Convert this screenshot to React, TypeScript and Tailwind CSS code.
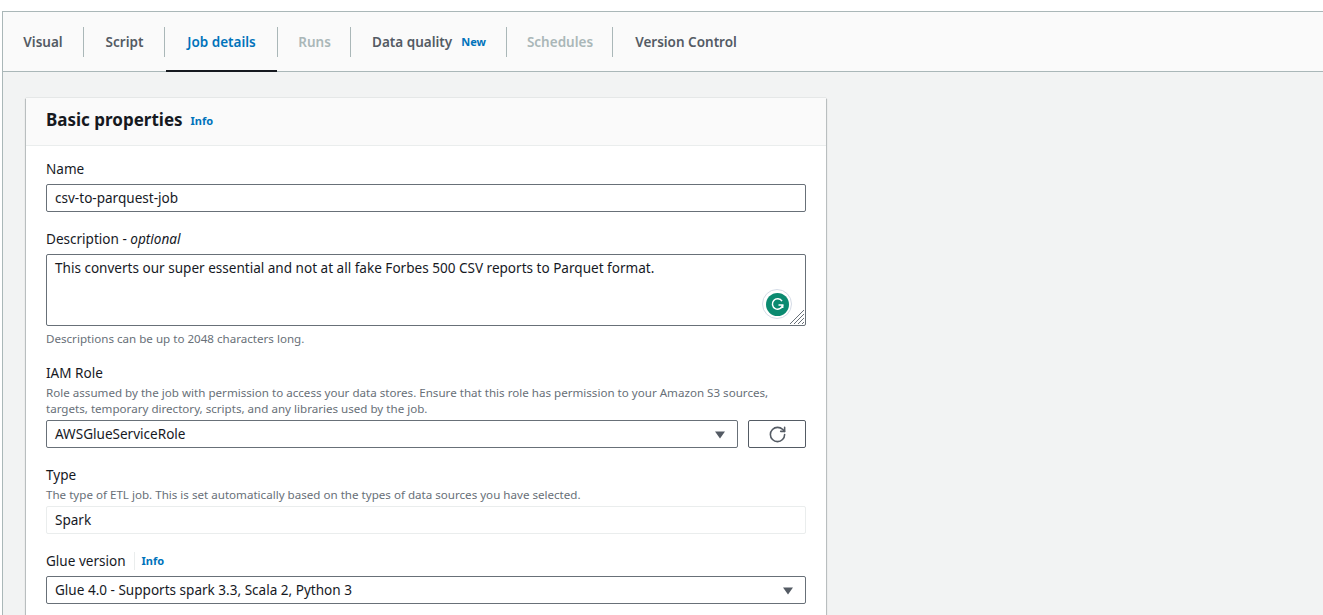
import React from "react";
import { RotateCw } from "lucide-react";

const font = "font-['Noto_Sans','Open_Sans',sans-serif]";

const tabs = [
  { label: "Visual", w: "w-[82px]", cls: "text-[#545b64]" },
  { label: "Script", w: "w-[81px]", cls: "text-[#545b64]" },
  { label: "Job details", w: "w-[113px]", cls: "text-[#0073bb]", active: true },
  { label: "Runs", w: "w-[73px]", cls: "text-[#aab7b8]" },
  { label: "Data quality", w: "w-[156px]", cls: "text-[#545b64]", badge: "New" },
  { label: "Schedules", w: "w-[106px]", cls: "text-[#aab7b8]" },
  { label: "Version Control", w: "w-[146px]", cls: "text-[#545b64]" },
];

function Caret() {
  return (
    <svg width="12" height="8" viewBox="0 0 12 8" className="shrink-0">
      <path d="M1 0.5h10L6 7.5z" fill="#545b64" />
    </svg>
  );
}

export default function App() {
  return (
    <div className={`${font} h-[615px] w-[1323px] overflow-hidden bg-white text-[#16191f] text-[13.55px]`}>
      <div className="h-[11px]" />
      <div className="ml-[2px] h-[604px] overflow-hidden border-l border-t border-[#aab7b8] bg-[#f2f3f3]">
        {/* Tabs */}
        <div className="flex h-[60px] items-center border-b border-[#aab7b8] bg-[#fafafa]">
          {tabs.map((t, i) => (
            <div
              key={t.label}
              className={`relative flex h-[59px] items-center justify-center gap-[9px] pt-[2px] ${t.w} ${i === 0 ? "-ml-[1px]" : ""}`}
            >
              <span className={`text-[13.5px] font-semibold ${t.cls}`}>{t.label}</span>
              {t.badge && <span className="text-[11px] font-bold text-[#0073bb]">{t.badge}</span>}
              {i < tabs.length - 1 && (
                <span className="absolute right-0 top-[15px] h-[30px] w-px bg-[#aab7b8]" />
              )}
              {t.active && <span className="absolute bottom-[-1px] left-[1px] right-[1px] h-[2px] bg-[#16191f]" />}
            </div>
          ))}
        </div>

        {/* Card */}
        <div className="ml-[23px] mt-[26px] w-[800px] bg-white pb-10 shadow-[0_0_1px_0_rgba(0,28,36,0.3),0_1px_1px_0_rgba(0,28,36,0.3),1px_1px_1px_0_rgba(0,28,36,0.15),-1px_1px_1px_0_rgba(0,28,36,0.15)]">
          <div className="flex h-[48px] items-center gap-2 border-b border-[#eaeded] bg-[#fafafa] px-5 pb-[4px]">
            <h2 className="text-[17px] font-bold">Basic properties</h2>
            <span className="mt-[3px] text-[11px] font-bold text-[#0073bb]">Info</span>
          </div>

          <div className="px-5 pt-[13px]">
            <div className="h-[20px] leading-[20px]">Name</div>
            <div className="mt-[5px] flex h-[28px] items-center rounded-[2px] border border-[#687078] px-2 pt-[1px]">csv-to-parquest-job</div>

            <div className="mt-[17px] h-[20px] leading-[20px]">
              Description - <i>optional</i>
            </div>
            <div className="relative mt-[5px] h-[72px] rounded-[2px] border border-[#687078] px-2 pt-[3px]">
              This converts our super essential and not at all fake Forbes 500 CSV reports to Parquet format.
              {/* Grammarly badge */}
              <div className="absolute bottom-[6px] right-[13px] flex h-[30px] w-[30px] items-center justify-center rounded-full border border-[#d5dbe6] bg-white">
                <div className="flex h-[23px] w-[23px] items-center justify-center rounded-full bg-[#0b8a70]">
                  <svg width="15" height="15" viewBox="0 0 15 15" fill="none" stroke="white" strokeWidth="1.5">
                    <path d="M12 4.2A5.2 5.2 0 1 0 12.7 8H8.5" />
                    <path d="M12.7 8v3" />
                  </svg>
                </div>
              </div>
              {/* Resize handle */}
              <svg width="16" height="16" viewBox="0 0 16 16" className="absolute bottom-0 right-0" stroke="#687078" strokeWidth="1">
                <path d="M1 15 15 1M5 15 15 5M9 15 15 9M13 15l2-2" />
              </svg>
            </div>
            <div className="mt-[5px] h-[16px] text-[11.6px] leading-[16px] text-[#687078]">Descriptions can be up to 2048 characters long.</div>

            <div className="mt-[16px] h-[20px] leading-[20px]">IAM Role</div>
            <div className="mt-[2px] w-[730px] text-[11.6px] leading-[16px] text-[#687078]">
              Role assumed by the job with permission to access your data stores. Ensure that this role has permission to your Amazon S3 sources, targets, temporary directory, scripts, and any libraries used by the job.
            </div>
            <div className="mt-[3px] flex gap-[10px]">
              <div className="flex h-[28px] w-[692px] items-center justify-between rounded-[2px] border border-[#687078] pl-2 pr-[11px] pt-[1px]">
                <span>AWSGlueServiceRole</span>
                <Caret />
              </div>
              <div className="flex h-[28px] w-[58px] items-center justify-center rounded-[2px] border border-[#545b64]">
                <RotateCw size={19} strokeWidth={2} className="text-[#545b64]" />
              </div>
            </div>

            <div className="mt-[17px] h-[20px] leading-[20px]">Type</div>
            <div className="mt-[2px] text-[11.6px] leading-[16px] text-[#687078]">The type of ETL job. This is set automatically based on the types of data sources you have selected.</div>
            <div className="mt-[3px] flex h-[28px] items-center rounded-[2px] border border-[#eaeded] px-2 pt-[1px]">Spark</div>

            <div className="mt-[17px] flex h-[20px] items-center leading-[20px]">
              <span>Glue version</span>
              <span className="ml-2 h-[18px] w-px bg-[#eaeded]" />
              <span className="ml-[7px] text-[11px] font-bold text-[#0073bb]">Info</span>
            </div>
            <div className="mt-[5px] flex h-[28px] items-center justify-between rounded-[2px] border border-[#687078] pl-2 pr-[11px] pt-[1px]">
              <span>Glue 4.0 - Supports spark 3.3, Scala 2, Python 3</span>
              <Caret />
            </div>
          </div>
        </div>
      </div>
    </div>
  );
}
